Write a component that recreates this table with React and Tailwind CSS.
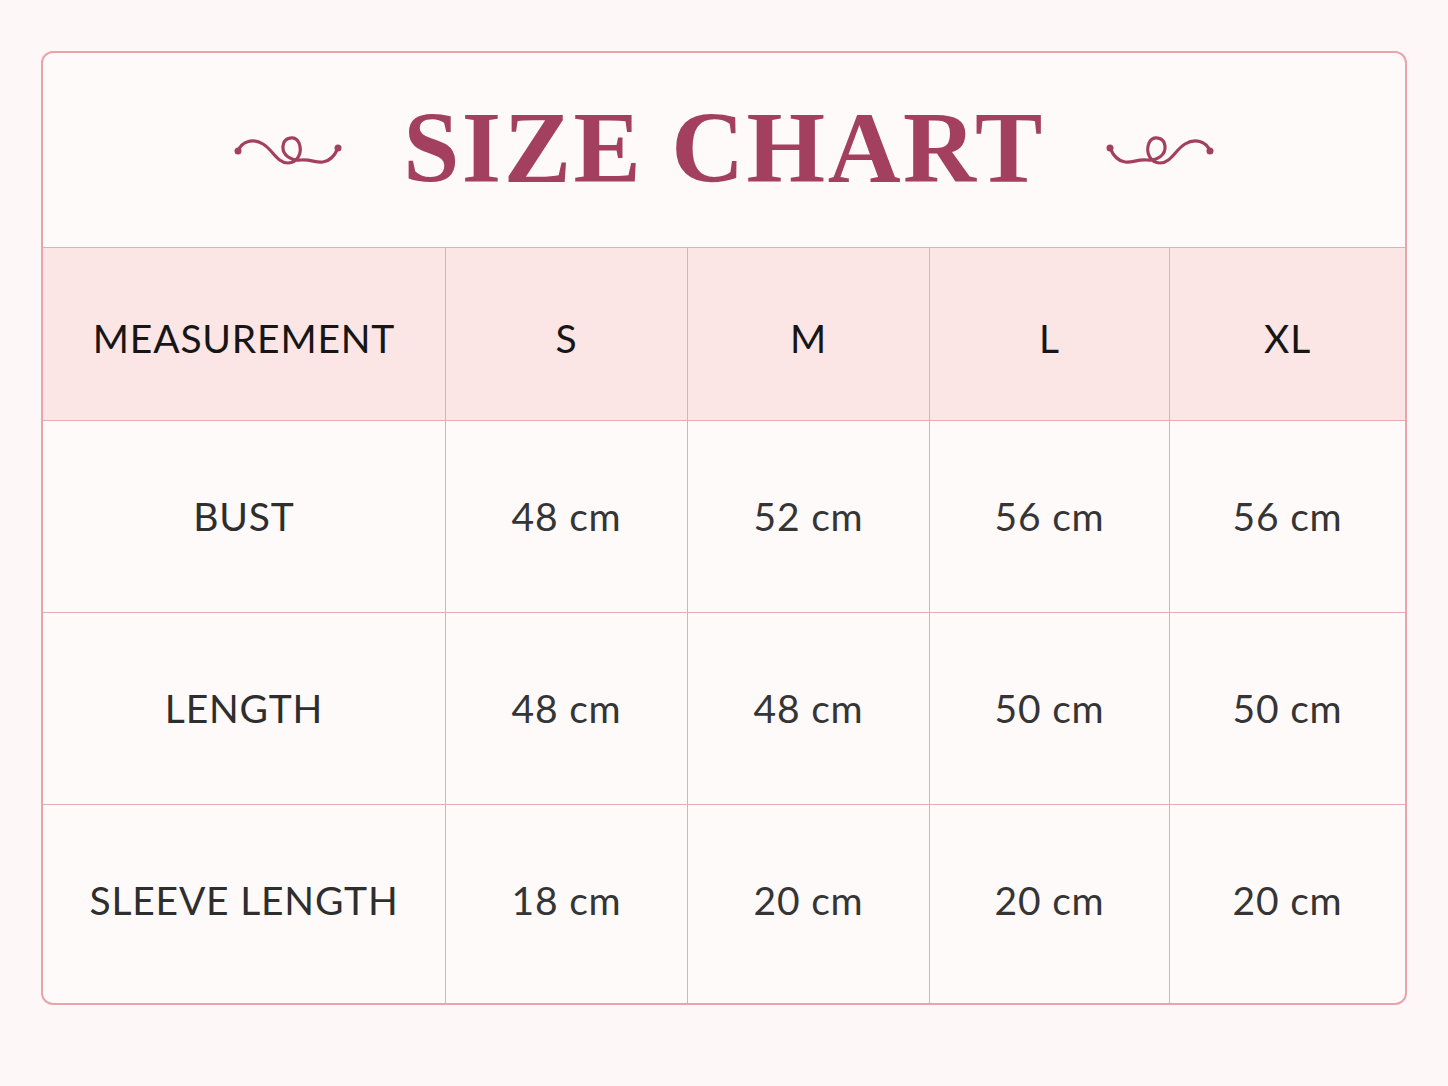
import React from "react";

const sizes = ["S", "M", "L", "XL"];

const rows = [
  { name: "BUST", values: ["48 cm", "52 cm", "56 cm", "56 cm"] },
  { name: "LENGTH", values: ["48 cm", "48 cm", "50 cm", "50 cm"] },
  { name: "SLEEVE LENGTH", values: ["18 cm", "20 cm", "20 cm", "20 cm"] },
];

function Flourish({ flip }) {
  return (
    <svg
      width="110"
      height="30"
      viewBox="0 0 110 30"
      fill="none"
      className={flip ? "-scale-x-100" : ""}
    >
      <path
        d="M5 16 C9 6 20 3 30 9 C40 15 44 28 55 28 C64 28 70 18 66 8 C62 0 51 2 50 11 C49 20 58 26 68 25 C78 24 82 28 90 27 C98 26 102 20 105 13"
        stroke="#a3405f"
        strokeWidth="3.2"
        strokeLinecap="round"
      />
      <circle cx="5" cy="16" r="3.5" fill="#a3405f" />
      <circle cx="105" cy="13" r="3.5" fill="#a3405f" />
    </svg>
  );
}

export default function App() {
  return (
    <div className="min-h-[1086px] bg-[#fdf8f7] pt-[51px] px-[41px] font-['Lato','Open_Sans',sans-serif]">
      <div className="w-[1366px] rounded-[12px] border-2 border-[#e9a4ab] bg-[#fffafa] overflow-hidden">
        {/* Title */}
        <div className="h-[194px] flex items-center justify-center gap-[60px]">
          <Flourish />
          <h1 className="font-['Liberation_Serif',serif] font-bold text-[101px] leading-none tracking-[2.5px] text-[#a3405f] -mt-[4px]">
            SIZE CHART
          </h1>
          <Flourish flip />
        </div>

        {/* Header row */}
        <div className="grid grid-cols-[402px_242px_242px_240px_1fr] h-[173px] border-t border-[#eba9b0] bg-[#fbe5e5]">
          <div className="flex items-center justify-center pt-[9px] text-[39px] tracking-[0.8px] text-[#161616]">
            MEASUREMENT
          </div>
          {sizes.map((s) => (
            <div
              key={s}
              className="flex items-center justify-center pt-[9px] border-l border-[#eba9b0] text-[39px] tracking-[0.8px] text-[#161616]"
            >
              {s}
            </div>
          ))}
        </div>

        {/* Body rows */}
        {rows.map((r, i) => {
          const last = i === rows.length - 1;
          return (
            <div
              key={r.name}
              className={`grid grid-cols-[402px_242px_242px_240px_1fr] border-t border-[#eba9b0] ${
                last ? "h-[199px]" : "h-[192px]"
              }`}
            >
              <div
                className={`flex items-center justify-center text-[39px] tracking-[0.8px] text-[#2e2e2e] ${
                  last ? "pb-[8px]" : ""
                }`}
              >
                {r.name}
              </div>
              {r.values.map((v, j) => (
                <div
                  key={j}
                  className={`flex items-center justify-center border-l border-[#eba9b0] text-[39px] tracking-[0.8px] text-[#353535] ${
                    last ? "pb-[8px]" : ""
                  }`}
                >
                  {v}
                </div>
              ))}
            </div>
          );
        })}
      </div>
    </div>
  );
}
